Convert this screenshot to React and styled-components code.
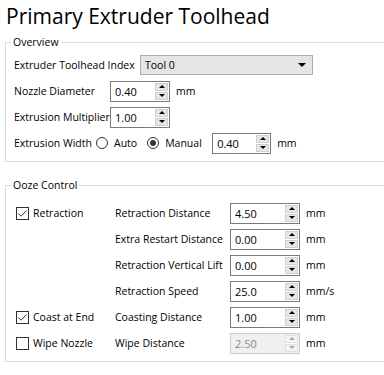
import React from 'react';
import styled, { createGlobalStyle } from 'styled-components';

const GlobalStyle = createGlobalStyle`
  html, body { margin: 0; padding: 0; background: #fff; }
  body {
    font-family: "Open Sans", "Liberation Sans", sans-serif;
    font-size: 10.5px;
    color: #000;
  }
`;

const Page = styled.div`
  width: 384px;
  height: 375px;
  overflow: hidden;
  background: #fff;
`;

const Title = styled.h1`
  margin: 0;
  height: 35px;
  padding: 2px 0 0 6px;
  box-sizing: border-box;
  font-size: 21px;
  font-weight: 400;
  line-height: 28px;
  color: #000;
`;

const Group = styled.fieldset`
  margin: ${(p) => (p.$top ? `${p.$top}px` : '0')} -20px 0 5px;
  padding: ${(p) => p.$padTop}px 8px ${(p) => p.$padBottom}px 8px;
  border: 1px solid #dcdcdc;
  min-width: 0;
`;

const Legend = styled.legend`
  margin-left: -3px;
  padding: 0 2px;
  line-height: 14px;
  color: #000;
`;

const Row = styled.div`
  display: flex;
  align-items: center;
  height: 26px;
`;

const Label = styled.span`
  width: ${(p) => (p.$w ? `${p.$w}px` : 'auto')};
  flex: none;
  white-space: nowrap;
`;

const Unit = styled.span`
  margin-left: 6px;
`;

const Combo = styled.div`
  width: 173px;
  height: 20px;
  box-sizing: border-box;
  background: #e5e5e5;
  border: 1px solid #adadad;
  display: flex;
  align-items: center;
  justify-content: space-between;
  padding: 0 6px 0 4px;
`;

const Caret = styled.span`
  width: 0;
  height: 0;
  border-left: 4px solid transparent;
  border-right: 4px solid transparent;
  border-top: 4px solid #000;
`;

const SpinBox = styled.div`
  width: ${(p) => p.$w}px;
  height: 21px;
  box-sizing: border-box;
  border: 1px solid ${(p) => (p.$disabled ? '#cccccc' : '#7a7a7a')};
  background: ${(p) => (p.$disabled ? '#f0f0f0' : '#fff')};
  color: ${(p) => (p.$disabled ? '#8a8a8a' : '#000')};
  display: flex;
  align-items: center;
  justify-content: space-between;
  padding: 1px 1px 1px 4px;
  font-size: 11px;
`;

const SpinButtons = styled.div`
  width: 13px;
  height: 17px;
  display: flex;
  flex-direction: column;
  gap: 1px;
  background: #fff;
`;

const SpinButton = styled.div`
  flex: 1;
  background: ${(p) => (p.$disabled ? '#f4f4f4' : '#e6e6e6')};
  border: 1px solid ${(p) => (p.$disabled ? '#e0e0e0' : '#d0d0d0')};
  display: flex;
  align-items: center;
  justify-content: center;
  &::after {
    content: '';
    border-left: 3px solid transparent;
    border-right: 3px solid transparent;
    ${(p) => (p.$down ? 'border-top' : 'border-bottom')}: 3px solid ${(p) => (p.$disabled ? '#a8a8a8' : '#000')};
  }
`;

const Spin = ({ value, w, disabled }) => (
  <SpinBox $w={w} $disabled={disabled}>
    <span>{value}</span>
    <SpinButtons>
      <SpinButton $disabled={disabled} />
      <SpinButton $down $disabled={disabled} />
    </SpinButtons>
  </SpinBox>
);

const Radio = styled.span`
  width: 12px;
  height: 12px;
  box-sizing: border-box;
  flex: none;
  border-radius: 50%;
  border: 1px solid #333;
  margin: 0 6px 0 ${(p) => p.$ml}px;
  display: flex;
  align-items: center;
  justify-content: center;
  &::after {
    content: '';
    width: 6px;
    height: 6px;
    border-radius: 50%;
    background: ${(p) => (p.$on ? '#333' : 'transparent')};
  }
`;

const OozeGrid = styled.div`
  display: grid;
  grid-template-columns: 101px 115px 70px auto;
  grid-auto-rows: 26px;
  align-items: center;
`;

const Check = styled.label`
  grid-column: 1;
  grid-row: ${(p) => p.$row};
  display: flex;
  align-items: center;
  gap: 4px;
  padding-left: 2px;
`;

const Box = styled.span`
  width: 13px;
  height: 13px;
  box-sizing: border-box;
  border: 1px solid #333;
  display: flex;
  align-items: center;
  justify-content: center;
`;

const Cell = styled.span`
  grid-column: ${(p) => p.$col};
  grid-row: ${(p) => p.$row};
  white-space: nowrap;
  ${(p) => (p.$unit ? 'padding-left: 6px;' : '')}
`;

const Tick = () => (
  <svg width="11" height="11" viewBox="0 0 11 11">
    <path d="M1.5 5.5 L4.2 8.2 L9.5 2.5" fill="none" stroke="#333" strokeWidth="1" />
  </svg>
);

const CheckItem = ({ row, on, children }) => (
  <Check $row={row}>
    <Box>{on && <Tick />}</Box>
    {children}
  </Check>
);

const oozeRows = [
  ['Retraction Distance', '4.50', 'mm'],
  ['Extra Restart Distance', '0.00', 'mm'],
  ['Retraction Vertical Lift', '0.00', 'mm'],
  ['Retraction Speed', '25.0', 'mm/s'],
  ['Coasting Distance', '1.00', 'mm'],
  ['Wipe Distance', '2.50', 'mm', true],
];

export default function App() {
  return (
    <Page>
      <GlobalStyle />
      <Title>Primary Extruder Toolhead</Title>

      <Group $padTop={3} $padBottom={5}>
        <Legend>Overview</Legend>
        <Row>
          <Label $w={126}>Extruder Toolhead Index</Label>
          <Combo>
            <span>Tool 0</span>
            <Caret />
          </Combo>
        </Row>
        <Row>
          <Label $w={96}>Nozzle Diameter</Label>
          <Spin value="0.40" w={60} />
          <Unit>mm</Unit>
        </Row>
        <Row>
          <Label $w={96}>Extrusion Multiplier</Label>
          <Spin value="1.00" w={60} />
        </Row>
        <Row>
          <Label $w={82}>Extrusion Width</Label>
          <Radio $ml={0} />
          <span>Auto</span>
          <Radio $ml={10} $on />
          <Label $w={47}>Manual</Label>
          <Spin value="0.40" w={59} />
          <Unit>mm</Unit>
        </Row>
      </Group>

      <Group $top={16} $padTop={8} $padBottom={5}>
        <Legend>Ooze Control</Legend>
        <OozeGrid>
          <CheckItem row={1} on>Retraction</CheckItem>
          <CheckItem row={5} on>Coast at End</CheckItem>
          <CheckItem row={6}>Wipe Nozzle</CheckItem>
          {oozeRows.map(([label, value, unit, disabled], i) => (
            <React.Fragment key={label}>
              <Cell $col={2} $row={i + 1}>{label}</Cell>
              <Cell $col={3} $row={i + 1}>
                <Spin value={value} w={70} disabled={disabled} />
              </Cell>
              <Cell $col={4} $row={i + 1} $unit>{unit}</Cell>
            </React.Fragment>
          ))}
        </OozeGrid>
      </Group>
    </Page>
  );
}
